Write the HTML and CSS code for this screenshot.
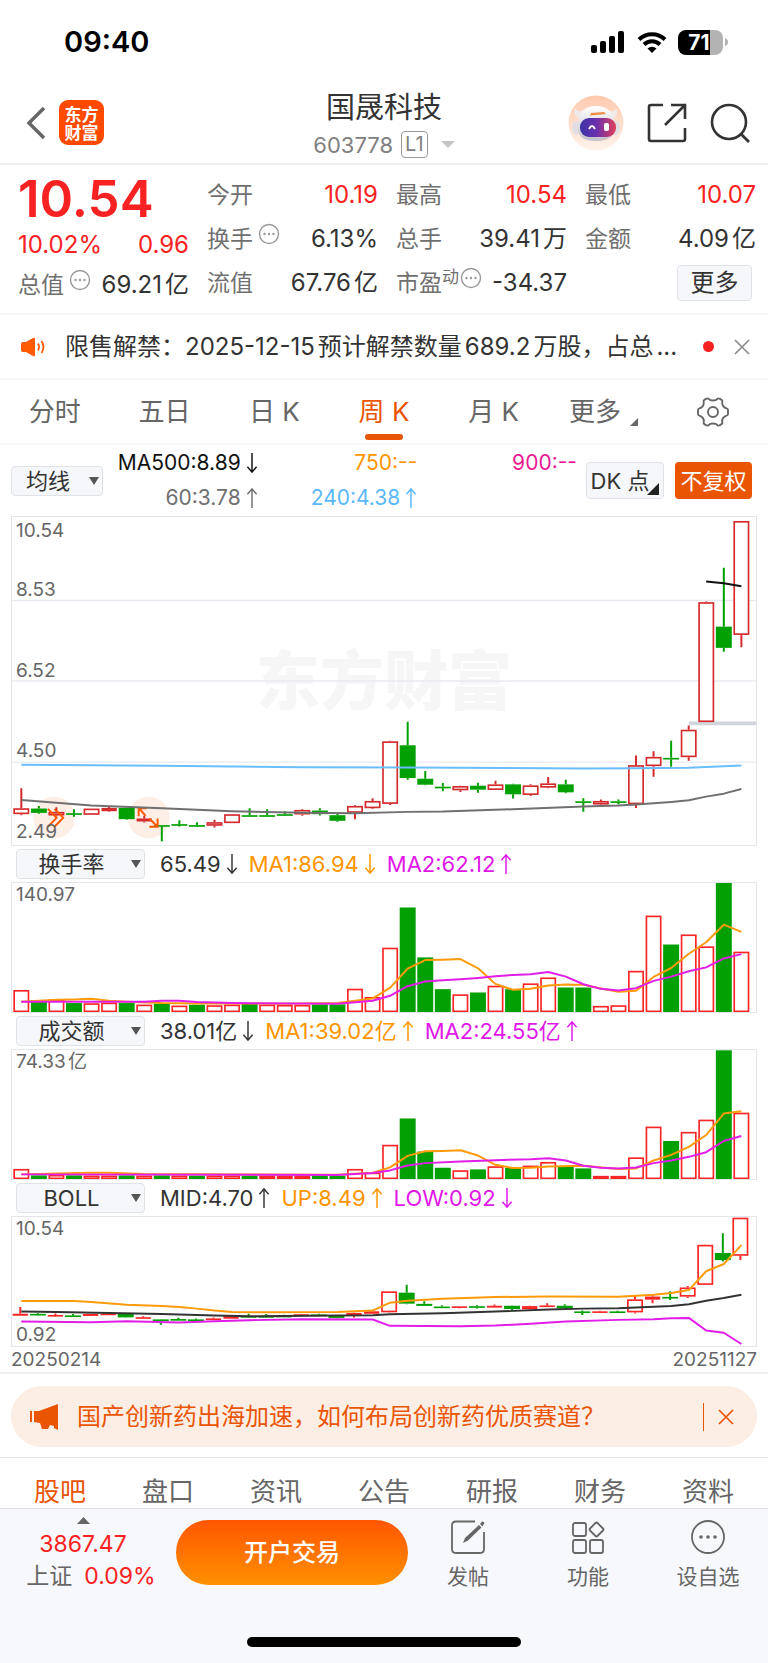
FILE: index.html
```html
<!DOCTYPE html>
<html lang="zh-CN">
<head>
<meta charset="utf-8">
<meta name="viewport" content="width=device-width, initial-scale=1">
<title>国晟科技 603778</title>
<link rel="stylesheet" href="styles.css">
</head>
<body>
<svg class="defs" aria-hidden="true">
  <symbol id="up" viewBox="0 0 12 24"><path d="M6 23V2M1 8L6 2L11 8" fill="none" stroke="currentColor" stroke-width="1.6"/></symbol>
  <symbol id="down" viewBox="0 0 12 24"><path d="M6 1V22M1 16L6 22L11 16" fill="none" stroke="currentColor" stroke-width="1.6"/></symbol>
  <symbol id="dots" viewBox="0 0 22 22"><circle cx="11" cy="11" r="9.5" fill="none" stroke="currentColor" stroke-width="1.4"/><g fill="currentColor"><circle cx="6.5" cy="11" r="1.2"/><circle cx="11" cy="11" r="1.2"/><circle cx="15.500" cy="11" r="1.2"/></g></symbol>
  <symbol id="close" viewBox="0 0 16 16"><path d="M1 1L15 15M15 1L1 15" fill="none" stroke="currentColor" stroke-width="1.7"/></symbol>
</svg>

<div class="status">
  <span class="clock">09:40</span>
  <div class="status-icons">
    <svg width="36" height="24" viewBox="0 0 36 24"><rect x="1" y="15" width="6" height="8" rx="2"/><rect x="10" y="11" width="6" height="12" rx="2"/><rect x="19" y="6" width="6" height="17" rx="2"/><rect x="28" y="1" width="6" height="22" rx="2"/></svg>
    <svg width="30" height="24" viewBox="0 0 30 24"><g fill="none" stroke="#000" stroke-width="4"><path d="M2 9.500A18.500 18.500 0 0 1 28 9.500"/><path d="M7 14.500A11.500 11.500 0 0 1 23 14.500"/></g><path d="M10.500 18.500A6.500 6.500 0 0 1 19.500 18.500L15 23Z"/></svg>
    <div class="battery"><span class="battery-body">71</span><svg width="3" height="8" viewBox="0 0 3 8"><path d="M0 0Q3 1 3 4T0 8Z" fill="#b3b3b3"/></svg></div>
  </div>
</div>

<header class="topbar">
  <div class="topbar-left">
    <button class="plain" aria-label="返回"><svg width="20" height="34" viewBox="0 0 20 34"><path d="M18 2L3 17L18 32" fill="none" stroke="#666" stroke-width="3.500"/></svg></button>
    <span class="logo">东方<br>财富</span>
  </div>
  <div class="title">
    <h1>国晟科技</h1>
    <div class="code"><span>603778</span><span class="level">L1</span><i class="tri tri-light"></i></div>
  </div>
  <div class="topbar-right">
    <button class="plain" aria-label="智能助手">
      <svg width="56" height="56" viewBox="0 0 56 56">
        <defs>
          <linearGradient id="peach" x1="0" y1="0" x2="0" y2="1"><stop offset="0" stop-color="#ffc9ae"/><stop offset="1" stop-color="#fff3ec"/></linearGradient>
          <linearGradient id="visor" x1="0" y1="0" x2="1" y2="0"><stop offset="0" stop-color="#3b35a5"/><stop offset=".45" stop-color="#6a2fb0"/><stop offset="1" stop-color="#e2405a"/></linearGradient>
          <linearGradient id="shell" x1="0" y1="0" x2="0" y2="1"><stop offset="0" stop-color="#fff"/><stop offset="1" stop-color="#c4c0c9"/></linearGradient>
        </defs>
        <circle cx="28" cy="28" r="27.500" fill="url(#peach)"/>
        <path d="M7 13Q4 20 12 24L17 15Q10 18 7 13ZM48 13Q52 20 44 24L38 15Q46 18 48 13Z" fill="#f0e9ea"/>
        <ellipse cx="8" cy="33" rx="4" ry="7" fill="#e2dee2"/><ellipse cx="48" cy="33" rx="4" ry="7" fill="#e2dee2"/>
        <path d="M10 29Q11 11 28 11T47 29Q49 46 28 46T10 29Z" fill="url(#shell)"/>
        <path d="M23 18L36 17L38 19L22 20.500Z" fill="#ee8a42"/>
        <rect x="12" y="23" width="36" height="19" rx="9" fill="url(#visor)"/>
        <path d="M21 34Q24 28 27 34" fill="none" stroke="#fff" stroke-width="2"/><rect x="36" y="28" width="5" height="8" rx="2" fill="#fff"/>
      </svg>
    </button>
    <button class="plain" aria-label="分享"><svg width="40" height="40" viewBox="0 0 40 40"><path d="M16 2H4Q2 2 2 4V36Q2 38 4 38H36Q38 38 38 36V25M24 2H38V16M38 2L18 22" fill="none" stroke="#333" stroke-width="2.600"/></svg></button>
    <button class="plain" aria-label="搜索"><svg width="40" height="40" viewBox="0 0 40 40"><circle cx="19" cy="19" r="17" fill="none" stroke="#333" stroke-width="2.600"/><path d="M31 31L39 39" stroke="#333" stroke-width="2.800"/></svg></button>
  </div>
</header>

<section class="quote">
  <div class="quote-main">
    <strong class="price">10.54</strong>
    <div class="cell red"><span>10.02%</span><span>0.96</span></div>
    <div class="cell"><span class="label">总值<svg class="info"><use href="#dots"/></svg></span><span>69.21亿</span></div>
  </div>
  <div class="quote-col">
    <div class="cell"><span class="label">今开</span><span class="red">10.19</span></div>
    <div class="cell"><span class="label">换手<svg class="info"><use href="#dots"/></svg></span><span>6.13%</span></div>
    <div class="cell"><span class="label">流值</span><span>67.76亿</span></div>
  </div>
  <div class="quote-col">
    <div class="cell"><span class="label">最高</span><span class="red">10.54</span></div>
    <div class="cell"><span class="label">总手</span><span>39.41万</span></div>
    <div class="cell"><span class="label">市盈<sup>动</sup><svg class="info info-tight"><use href="#dots"/></svg></span><span>-34.37</span></div>
  </div>
  <div class="quote-col">
    <div class="cell"><span class="label">最低</span><span class="red">10.07</span></div>
    <div class="cell"><span class="label">金额</span><span>4.09亿</span></div>
    <div class="cell cell-end"><button class="chip more">更多</button></div>
  </div>
</section>

<section class="notice">
  <svg width="25" height="20" viewBox="0 0 25 20"><path d="M1 7Q1 5 3 5H6L13 1Q15 0 15 2V18Q15 20 13 19L6 15H3Q1 15 1 13Z" fill="#ff5a00"/><path d="M18 6.500Q20 10 18 13.500M21.500 4Q25.500 10 21.500 16" fill="none" stroke="#ff5a00" stroke-width="1.800"/></svg>
  <p>限售解禁：2025-12-15预计解禁数量689.2万股，占总...</p>
  <i class="dot"></i>
  <button class="plain grey" aria-label="关闭"><svg width="16" height="16"><use href="#close"/></svg></button>
</section>

<nav class="periods">
  <button>分时</button>
  <button>五日</button>
  <button>日 K</button>
  <button class="on">周 K</button>
  <button>月 K</button>
  <button class="with-corner">更多<i class="corner"></i></button>
  <button aria-label="设置"><svg width="32" height="32" viewBox="0 0 32 32" fill="none" stroke="#666" stroke-width="1.900"><path d="M16 4.500Q19 4.500 20.500 2.800Q21.500 2 22.600 2.700L24.600 3.800Q25.800 4.600 25.300 6Q24.800 8.200 26.200 10.100Q27.600 12 29.600 12.400Q31 12.800 31 14V18Q31 19.200 29.600 19.600Q27.600 20 26.200 21.900Q24.800 23.800 25.300 26Q25.800 27.400 24.600 28.200L22.600 29.300Q21.500 30 20.500 29.200Q19 27.500 16 27.500Q13 27.500 11.500 29.200Q10.500 30 9.400 29.300L7.400 28.200Q6.200 27.400 6.700 26Q7.200 23.800 5.800 21.900Q4.400 20 2.400 19.600Q1 19.200 1 18V14Q1 12.800 2.400 12.400Q4.400 12 5.800 10.100Q7.200 8.200 6.700 6Q6.200 4.600 7.400 3.800L9.400 2.700Q10.500 2 11.500 2.800Q13 4.500 16 4.500Z"/><circle cx="16" cy="16" r="5"/></svg></button>
</nav>

<section class="ma">
  <label class="pick pick-small"><select class="chip" aria-label="主图指标"><option>均线</option></select><i class="tri"></i></label>
  <div class="ma-values">
    <span class="black">MA500:8.89<svg class="arrow"><use href="#down"/></svg></span>
    <span class="orange">750:--</span>
    <span class="pink">900:--</span>
    <span class="mid-grey">60:3.78<svg class="arrow"><use href="#up"/></svg></span>
    <span class="blue">240:4.38<svg class="arrow"><use href="#up"/></svg></span>
  </div>
  <button class="chip dk">DK 点<i class="corner corner-dark"></i></button>
  <button class="adjust">不复权</button>
</section>

<main class="charts">
  <div class="chart chart-k">
    <span class="watermark">东方财富</span>
    <svg id="k" viewBox="33 18 2238 990" preserveAspectRatio="none"></svg>
    <div class="scale"><span>10.54</span><span>8.53</span><span>6.52</span><span>4.50</span><span>2.49</span></div>
  </div>

  <div class="indicator">
    <label class="pick"><select class="chip" aria-label="副图一"><option>换手率</option></select><i class="tri"></i></label>
    <span>65.49<svg class="arrow"><use href="#down"/></svg></span>
    <span class="orange">MA1:86.94<svg class="arrow"><use href="#down"/></svg></span>
    <span class="magenta">MA2:62.12<svg class="arrow"><use href="#up"/></svg></span>
  </div>
  <div class="chart chart-sub">
    <svg id="turnover" viewBox="33 111 2238 390" preserveAspectRatio="none"></svg>
    <div class="scale"><span>140.97</span></div>
  </div>

  <div class="indicator">
    <label class="pick"><select class="chip" aria-label="副图二"><option>成交额</option></select><i class="tri"></i></label>
    <span>38.01亿<svg class="arrow"><use href="#down"/></svg></span>
    <span class="orange">MA1:39.02亿<svg class="arrow"><use href="#up"/></svg></span>
    <span class="magenta">MA2:24.55亿<svg class="arrow"><use href="#up"/></svg></span>
  </div>
  <div class="chart chart-sub">
    <svg id="amount" viewBox="33 611 2238 390" preserveAspectRatio="none"></svg>
    <div class="scale"><span>74.33亿</span></div>
  </div>

  <div class="indicator">
    <label class="pick"><select class="chip" aria-label="副图三"><option>BOLL</option></select><i class="tri"></i></label>
    <span>MID:4.70<svg class="arrow"><use href="#up"/></svg></span>
    <span class="orange">UP:8.49<svg class="arrow"><use href="#up"/></svg></span>
    <span class="magenta">LOW:0.92<svg class="arrow"><use href="#down"/></svg></span>
  </div>
  <div class="chart chart-sub">
    <svg id="boll" viewBox="33 108 2238 390" preserveAspectRatio="none"></svg>
    <div class="scale"><span>10.54</span><span>0.92</span></div>
  </div>
  <div class="dates"><time>20250214</time><time>20251127</time></div>
</main>

<aside class="promo">
  <svg width="30" height="26" viewBox="0 0 30 26" fill="#ea5504"><path d="M0 7H2V18H0ZM4 7H9L28 0V26L24 24V22L20 21L18 25H12L10 19L4 18Z"/></svg>
  <a href="#promo">国产创新药出海加速，如何布局创新药优质赛道？</a>
  <i class="bar"></i>
  <button class="plain" aria-label="关闭"><svg width="16" height="16"><use href="#close"/></svg></button>
</aside>

<nav class="sections">
  <button class="on">股吧</button><button>盘口</button><button>资讯</button><button>公告</button><button>研报</button><button>财务</button><button>资料</button>
</nav>

<footer class="dock">
  <div class="dock-row">
    <div class="index">
      <svg width="13" height="7" viewBox="0 0 13 7"><path d="M0 7L6.500 0L13 7Z" fill="#666"/></svg>
      <span class="red">3867.47</span>
      <div><span>上证</span><span class="red">0.09%</span></div>
    </div>
    <button class="trade">开户交易</button>
    <button class="tool"><svg width="34" height="34" viewBox="0 0 34 34"><path d="M24 1.500H5Q1 1.500 1 5.500V29Q1 33 5 33H29Q33 33 33 29V12" fill="none" stroke="#666" stroke-width="1.800"/><path d="M12 23L14 18L28 5L30.500 7.500L17 20.500ZM29 4L31 1.500Q32.500 1 33.500 3L31.500 6.500Z" fill="#666"/></svg>发帖</button>
    <button class="tool"><svg width="34" height="34" viewBox="0 0 34 34" fill="none" stroke="#666" stroke-width="1.800"><rect x="2" y="3" width="13" height="13" rx="2"/><rect x="2" y="20" width="13" height="13" rx="2"/><rect x="19" y="20" width="13" height="13" rx="2"/><path d="M24.500 3Q25.500 2 26.500 3L32 8.500Q33 9.500 32 10.500L26.500 16Q25.500 17 24.500 16L19 10.500Q18 9.500 19 8.500Z"/></svg>功能</button>
    <button class="tool"><svg width="34" height="34" viewBox="0 0 34 34"><circle cx="17" cy="17" r="16" fill="none" stroke="#666" stroke-width="1.800"/><g fill="#666"><circle cx="10" cy="17" r="1.800"/><circle cx="17" cy="17" r="1.800"/><circle cx="24" cy="17" r="1.800"/></g></svg>设自选</button>
  </div>
  <i class="home"></i>
</footer>
<script src="charts.js"></script>
</body>
</html>
```

FILE: styles.css
```css
* { box-sizing: border-box; }

body {
  margin: 0;
  background: #fff;
  color: #333;
  font-family: Inter, "Noto Sans CJK SC", sans-serif;
  font-size: 24px;
  line-height: 32px;
  text-autospace: normal;
}

button, select {
  font: inherit;
  color: inherit;
  border: 0;
  background: none;
  padding: 0;
  margin: 0;
  cursor: pointer;
}

svg { display: block; flex: none; }
h1, p { margin: 0; font-weight: 400; }
i { display: block; flex: none; }
.defs { display: none; }
.plain { display: flex; align-items: center; }

.red { color: #f92222; }
.orange { color: #ff9500; }
.pink { color: #ea1a93; }
.magenta { color: #df18e8; }
.blue { color: #5bb8fb; }
.black { color: #111; }
.mid-grey { color: #707070; }
.grey { color: #8c8c8c; }

.chip {
  background: #f6f7fa;
  border: 1px solid #dfe2e7;
  border-radius: 4px;
}

.tri {
  border: 5px solid transparent;
  border-top: 8px solid #555;
  border-bottom: 0;
}
.tri-light { border-width: 7px 7px 0; border-top-color: #c4c4c4; }

/* status bar */
.status {
  display: flex;
  justify-content: space-between;
  align-items: center;
  height: 84px;
  padding: 0 40px 0 64px;
}
.clock { font-size: 29px; font-weight: 600; color: #000; }
.status-icons { display: flex; align-items: center; gap: 11px; }
.battery { display: flex; align-items: center; gap: 2px; }
.battery-body {
  width: 45px;
  height: 25px;
  padding-right: 3px;
  border-radius: 8px;
  background: linear-gradient(90deg, #000 71%, #b3b3b3 71%);
  color: #fff;
  font-size: 21px;
  font-weight: 700;
  line-height: 25px;
  text-align: center;
}

/* header */
.topbar {
  display: grid;
  grid-template-columns: 1fr auto 1fr;
  align-items: center;
  height: 81px;
  padding: 0 18px 2px;
  border-bottom: 2px solid #eeeff0;
}
.topbar-left { display: flex; align-items: center; gap: 13px; padding-left: 8px; }
.logo {
  width: 45px;
  height: 45px;
  padding-top: 5px;
  border-radius: 9px;
  background: #ff4a00;
  color: #fff;
  font-family: "Noto Sans CJK SC", sans-serif;
  font-size: 17px;
  font-weight: 700;
  line-height: 18px;
  text-align: center;
}
.title { padding-top: 4px; text-align: center; }
.title h1 { font-size: 29px; line-height: 38px; }
.code {
  display: flex;
  align-items: center;
  justify-content: center;
  gap: 8px;
  padding-top: 2px;
  color: #808080;
  font-size: 22px;
}
.level {
  padding: 0 3px;
  border: 1px solid #999;
  border-radius: 4px;
  font-size: 20px;
  line-height: 25px;
}
.code .tri { margin-left: 5px; }
.topbar-right { display: flex; align-items: center; justify-content: flex-end; gap: 23px; }

/* quote */
.quote {
  display: grid;
  grid-template-columns: repeat(4, 1fr);
  gap: 18px;
  padding: 8px 12px 8px 18px;
  border-bottom: 2px solid #f5f6f7;
}
.cell {
  display: flex;
  align-items: center;
  justify-content: space-between;
  height: 44px;
  white-space: nowrap;
}
.quote-main .cell { height: 40px; }
.cell-end { justify-content: flex-end; padding-right: 4px; }
.price {
  display: block;
  height: 52px;
  color: #f92222;
  font-size: 51px;
  font-weight: 600;
  line-height: 52px;
}
.label { display: flex; color: #707070; font-size: 23px; }
.label sup { font-size: 17px; line-height: 20px; }
.info { width: 22px; height: 22px; margin-left: 5px; color: #999; }
.info-tight { margin-left: 1px; }
.more { width: 75px; height: 36px; line-height: 32px; }

/* notice */
.notice {
  display: flex;
  align-items: center;
  height: 65px;
  padding: 0 18px 0 20px;
  border-bottom: 2px solid #f5f6f7;
}
.notice p { flex: 1; min-width: 0; margin-left: 20px; overflow: hidden; white-space: nowrap; }
.dot { width: 11px; height: 11px; margin: 0 20px; border-radius: 50%; background: #f92222; }

/* period tabs */
.periods {
  display: grid;
  grid-template-columns: repeat(7, 1fr);
  height: 65px;
  border-bottom: 2px solid #f5f6f7;
  color: #666;
  font-size: 26px;
}
.periods button { position: relative; display: flex; align-items: center; justify-content: center; }
.periods .on { color: #ea5504; }
.periods .on::after {
  content: "";
  position: absolute;
  bottom: 3px;
  width: 38px;
  height: 6px;
  border-radius: 3px;
  background: #ea5504;
}
.corner { border: 4px solid #666; border-top-color: transparent; border-left-color: transparent; }
.with-corner { gap: 9px; }
.with-corner .corner { margin-top: 20px; }
.corner-dark { position: absolute; right: 4px; bottom: 3px; border-width: 6px; border-right-color: #222; border-bottom-color: #222; }

/* moving averages */
.ma { display: flex; align-items: center; height: 71px; padding: 0 16px 0 11px; font-size: 22px; }
.pick { position: relative; display: block; flex: none; width: 129px; }
.pick-small { width: 92px; }
.pick select {
  appearance: none;
  display: block;
  width: 100%;
  height: 30px;
  padding: 0 18px 0 0;
  font-size: 22px;
  line-height: 26px;
  text-align: center;
  text-align-last: center;
}
.pick .tri { position: absolute; right: 4px; top: 11px; pointer-events: none; }
.ma-values {
  flex: 1;
  display: grid;
  grid-template-columns: 31fr 32fr 32fr;
  justify-items: end;
  row-gap: 3px;
  margin-right: 9px;
  font-size: 21px;
}
.ma-values span, .indicator span { display: flex; align-items: center; gap: 5px; white-space: nowrap; }
.arrow { width: 12px; height: 22px; }
.dk { position: relative; width: 78px; height: 37px; padding-right: 10px; }
.adjust { width: 77px; height: 37px; margin-left: 11px; border-radius: 4px; background: #ea5504; color: #fff; }

/* charts */
.charts { padding: 0 11px; border-bottom: 2px solid #eeeff0; }
.chart { position: relative; border: 1px solid #e3e5e9; }
.chart > svg { position: relative; width: 100%; height: 100%; }
.chart-k { height: 330px; }
.chart-sub { height: 131px; }
.watermark {
  position: absolute;
  inset: 0;
  display: flex;
  align-items: center;
  justify-content: center;
  color: #f6f6f6;
  font-size: 64px;
  font-weight: 900;
}
.scale {
  position: absolute;
  inset: 0;
  display: flex;
  flex-direction: column;
  justify-content: space-between;
  padding: 1px 4px 0;
  color: #666;
  font-size: 19px;
  line-height: 22px;
}
.chart-k .scale { display: grid; grid-template-rows: repeat(4, 1fr); align-items: end; padding: 3px 4px 2px; }
.chart-k .scale span { grid-column: 1; }
.chart-k .scale span:nth-child(1) { grid-row: 1; align-self: start; }
.chart-k .scale span:nth-child(2) { grid-row: 1; }
.indicator {
  display: flex;
  align-items: center;
  gap: 11px;
  height: 36px;
  padding-left: 5px;
  font-size: 22px;
  text-autospace: no-autospace;
}
.indicator .pick { margin-right: 4px; }
.dates { display: flex; justify-content: space-between; height: 25px; color: #666; font-size: 19px; line-height: 25px; }

/* promo banner */
.promo {
  display: flex;
  align-items: center;
  height: 61px;
  margin: 12px 11px 10px;
  padding: 0 23px 0 19px;
  border-radius: 31px;
  background: #fdeee5;
  color: #ea5504;
}
.promo a { flex: 1; margin-left: 17px; color: inherit; text-decoration: none; }
.bar { width: 1px; height: 28px; margin-right: 14px; background: #ea5504; }

/* section tabs */
.sections {
  display: grid;
  grid-template-columns: repeat(7, 1fr);
  height: 51px;
  padding: 17px 6px 0;
  border-top: 1px solid #e3e4e6;
  color: #666;
  font-size: 26px;
}
.sections .on { color: #ea5504; }

/* bottom dock */
.dock { height: 157px; border-top: 1px solid #dcdde0; background: #f7f8fb; color: #666; }
.dock-row { display: grid; grid-template-columns: 22fr 29fr 15fr 15fr 15fr; padding-top: 8px; }
.index { display: flex; flex-direction: column; align-items: center; padding-right: 10px; }
.index > span { margin-top: 4px; font-size: 23px; }
.index div { display: flex; gap: 12px; padding-left: 16px; font-size: 23px; }
.trade {
  height: 65px;
  margin-top: 3px;
  border-radius: 33px;
  background: linear-gradient(#ff5600, #ff9000);
  color: #fff;
  font-weight: 500;
}
.tool { display: flex; flex-direction: column; align-items: center; gap: 7px; padding-top: 3px; font-size: 21px; }
.home { width: 274px; height: 10px; margin: 44px auto 0; border-radius: 5px; background: #000; }
```

FILE: charts.js
```js
const RED = "#d42a2c", HOT = "#fa2525", GREEN = "#02a002";
const center = i => 61 + 52.83 * i;

// [colour, high, body top, body bottom, low]
const candles = [
  ["r",837,897,915,918],["g",890,898,911,914],["r",894,908,919,922],["g",900,912,915,923],["r",898,898,917,917],
  ["r",892,896,906,908],["g",896,896,930,932],["r",920,928,937,940],["g",948,948,951,997],["g",933,945,948,952],
  ["g",939,948,951,954],["r",932,939,950,955],["r",915,915,942,942],["g",897,918,921,921],["g",900,918,921,921],
  ["g",906,915,918,920],["r",900,902,916,920],["g",897,904,915,919],["g",912,918,935,938],["r",888,890,911,930],
  ["r",867,875,897,899],["r",693,695,884,887],["g",636,707,806,811],["g",785,808,826,828],["g",821,832,836,846],
  ["r",829,830,843,848],["g",820,829,841,850],["r",814,825,842,842],["g",823,825,855,868],["r",825,828,857,860],
  ["r",803,822,835,837],["g",811,825,849,852],["g",867,876,880,908],["r",871,875,886,890],["g",871,876,880,886],
  ["r",738,767,885,896],["r",725,742,770,802],["g",693,745,749,772],["r",647,660,743,754],["r",273,275,637,637],
  ["g",171,349,413,425],["r",30,30,374,411]
];
const barColours = "rgrgrrgrgrgrrgrrrggrrrgggrgrgrrggrrrrgrrgr";
const turnover = [435,465,463,474,475,473,474,479,476,482,479,481,479,474,479,480,480,478,478,431,456,307,185,336,432,448,442,422,432,415,397,427,427,483,481,377,210,297,267,303,111,319];
const amount = [971,990,989,990,991,991,990,991,990,991,991,991,991,991,992,992,992,992,992,971,982,898,818,918,967,975,972,963,967,961,950,962,969,992,992,936,843,886,859,822,612,801];

function line(points, colour, width = 6) {
  const p = points.map(([i, y]) => center(i).toFixed(0) + "," + y).join(" ");
  return `<polyline points="${p}" fill="none" stroke="${colour}" stroke-width="${width}" stroke-linejoin="round"/>`;
}

function candle([c, high, top, bottom, low], x, red, map, w) {
  const colour = c === "r" ? red : GREEN;
  const [h, t, b, l] = [high, top, bottom, low].map(map);
  const height = Math.max(b - t, w);
  let out = `<path d="M${x} ${h}V${t}M${x} ${b}V${l}" stroke="${colour}" stroke-width="${w + 1}"/>`;
  if (c === "g") return out + `<rect x="${x - 24}" y="${t}" width="48" height="${height}" fill="${colour}"/>`;
  if (height < 2 * w + 1) return out + `<rect x="${x - 23}" y="${t}" width="46" height="${height}" fill="${colour}"/>`;
  return out + `<rect x="${x - 21.5}" y="${t + w / 2}" width="43" height="${height - w}" fill="#fff" stroke="${colour}" stroke-width="${w}"/>`;
}

function bars(tops, base) {
  return tops.map((y, i) => {
    const x = center(i);
    if (barColours[i] === "g") return `<rect x="${x - 24}" y="${y}" width="48" height="${base - y}" fill="${GREEN}"/>`;
    return `<rect x="${x - 21.5}" y="${y + 2}" width="43" height="${base - y - 4}" fill="#fff" stroke="${HOT}" stroke-width="5"/>`;
  }).join("");
}

document.getElementById("k").innerHTML =
  [270, 513, 758].map(y => `<path d="M33 ${y}H2271" stroke="#e8e9f0" stroke-width="4"/>`).join("") +
  `<circle cx="160" cy="925" r="63" fill="#fdeee6"/><circle cx="444" cy="925" r="63" fill="#fdeee6"/>` +
  `<path d="M2069 641H2271" stroke="#d2d5db" stroke-width="11"/>` +
  candles.map((c, i) => candle(c, center(i), RED, v => v, 5)).join("") +
  `<path d="M141 899L167 926L141 953M161 899L187 926L161 953M435 920L415 897M414 921V897H438M446 928L470 952M446 953H471V928" fill="none" stroke="#ff5a00" stroke-width="6"/>` +
  line([[0,766],[8,769],[16,773],[22,774],[32,777],[35,776],[38,775],[41,768]], "#6bbefd") +
  line([[0,872],[4,889],[8,897],[12,906],[16,911],[19,912],[22,908],[24,907],[28,900],[32,892],[34,889],[35,886],[37,878],[38,873],[39,862],[40,853],[41,839]], "#707070") +
  line([[39,213],[40,218],[41,227]], "#111");

document.getElementById("turnover").innerHTML = bars(turnover, 501) +
  line([[0,470],[2,464],[3,463],[4,461],[5,467],[6,470],[8,474],[10,475],[15,476],[18,474],[19,467],[20,460],[21,428],[22,370],[23,344],[24,343],[25,341],[26,369],[27,416],[28,434],[29,431],[30,421],[31,418],[32,419],[33,430],[34,440],[35,437],[36,395],[37,368],[38,325],[39,290],[40,237],[41,259]], "#ff9a0a") +
  line([[0,470],[7,470],[8,467],[9,467],[10,471],[12,474],[18,476],[20,467],[21,452],[22,423],[23,409],[24,405],[25,402],[26,398],[27,393],[28,389],[29,387],[30,380],[31,394],[32,417],[33,431],[34,436],[35,429],[36,407],[37,394],[38,378],[39,366],[40,339],[41,326]], "#e01ee8");

document.getElementById("amount").innerHTML = bars(amount, 1001) +
  line([[0,987],[2,984],[4,982],[5,982],[7,986],[18,988],[20,982],[21,966],[22,931],[23,917],[24,916],[25,914],[26,930],[27,958],[28,968],[29,967],[30,963],[32,961],[34,971],[35,969],[36,945],[37,928],[38,904],[39,868],[40,803],[41,796]], "#ff9a0a") +
  line([[0,987],[18,989],[20,983],[21,975],[22,960],[23,953],[25,948],[27,944],[29,941],[30,938],[31,945],[32,961],[33,967],[34,969],[35,966],[36,953],[37,945],[38,934],[39,920],[40,886],[41,871]], "#e01ee8");

document.getElementById("boll").innerHTML =
  candles.map((c, i) => candle(c, center(i) - 3, HOT, y => 110 + (y - 30) * 0.335, 5)).join("") +
  line([[0,362],[3,362],[4,365],[6,373],[8,377],[9,380],[10,385],[11,391],[12,395],[14,396],[18,395],[20,391],[21,367],[22,361],[24,355],[27,350],[30,348],[34,349],[35,346],[36,343],[37,338],[38,329],[39,272],[40,250],[41,193]], "#ff9a0a") +
  line([[0,394],[2,395],[8,401],[11,406],[13,408],[18,406],[20,405],[21,402],[24,399],[27,394],[30,388],[32,385],[34,384],[36,379],[37,377],[38,372],[39,361],[40,353],[41,343]], "#333") +
  line([[0,424],[4,426],[6,423],[9,427],[11,423],[13,420],[16,417],[20,418],[21,437],[25,438],[27,436],[29,431],[31,424],[34,419],[36,417],[37,414],[38,413],[39,451],[40,458],[41,492]], "#e01ee8");
```
